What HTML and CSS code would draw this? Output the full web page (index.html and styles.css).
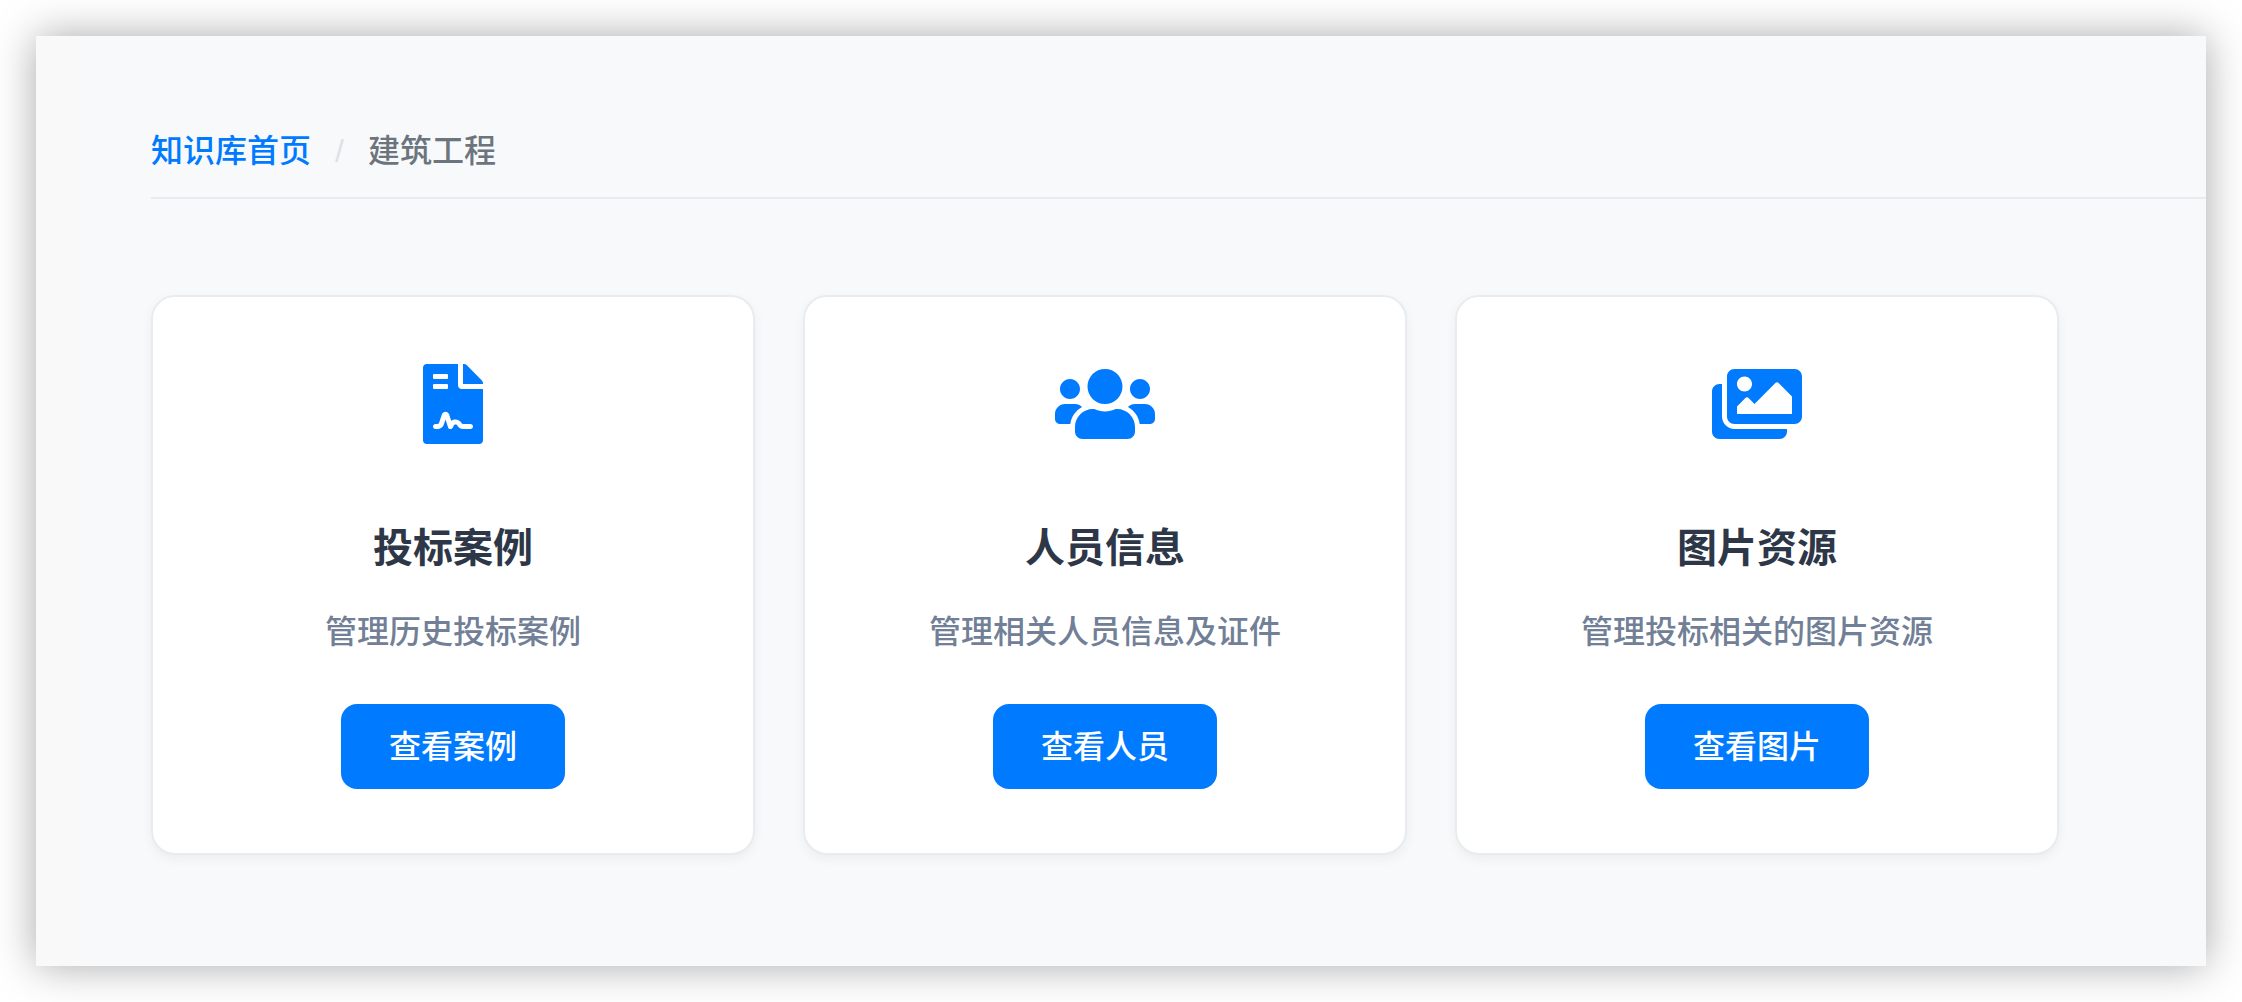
FILE: index.html
```html
<!DOCTYPE html>
<html lang="zh-CN">
<head>
<meta charset="utf-8">
<title>建筑工程</title>
<link rel="stylesheet" href="styles.css">
</head>
<body>
<main class="panel">
  <nav class="breadcrumb" aria-label="breadcrumb">
    <a class="breadcrumb-link" href="#">知识库首页</a>
    <span class="breadcrumb-separator">/</span>
    <span class="breadcrumb-current">建筑工程</span>
  </nav>
  <div class="cards">
    <section class="card">
      <svg class="card-icon" viewBox="0 0 384 512" aria-hidden="true"><path d="M224 136V0H24C10.7 0 0 10.7 0 24v464c0 13.3 10.7 24 24 24h336c13.3 0 24-10.7 24-24V160H248c-13.2 0-24-10.8-24-24zM64 72c0-4.42 3.58-8 8-8h80c4.42 0 8 3.58 8 8v16c0 4.42-3.58 8-8 8H72c-4.42 0-8-3.58-8-8V72zm0 64c0-4.42 3.58-8 8-8h80c4.42 0 8 3.58 8 8v16c0 4.42-3.58 8-8 8H72c-4.42 0-8-3.58-8-8v-16zm192.81 248H304c8.84 0 16 7.16 16 16s-7.16 16-16 16h-47.19c-16.45 0-31.5-9.14-38.64-23.64-2.97-5.53-8.02-5.59-10.17-5.59s-7.2.06-10.05 5.83l-7.67 15.16a15.986 15.986 0 0 1-14.31 8.84c-.38 0-.75-.02-1.14-.05-6.45-.45-12-4.75-14.03-10.89L144 354.59l-10.61 31.88c-5.89 17.66-22.38 29.53-41 29.53H80c-8.84 0-16-7.16-16-16s7.16-16 16-16h12.39c4.83 0 9.11-3.08 10.64-7.66l18.19-54.64c3.3-9.81 12.44-16.41 22.78-16.41s19.48 6.59 22.77 16.41l13.88 41.64c19.77-16.19 54.05-9.7 66 14.16 1.99 3.95 6.12 6.5 10.35 6.5zM377 105L279.1 7c-4.5-4.5-10.6-7-17-7H256v128h128v-6.1c0-6.3-2.5-12.4-7-16.9z"/></svg>
      <h2 class="card-title">投标案例</h2>
      <p class="card-text">管理历史投标案例</p>
      <button class="card-button" type="button">查看案例</button>
    </section>
    <section class="card">
      <svg class="card-icon" viewBox="0 0 640 512" aria-hidden="true"><path d="M96 224c35.3 0 64-28.7 64-64s-28.7-64-64-64-64 28.7-64 64 28.7 64 64 64zm448 0c35.3 0 64-28.7 64-64s-28.7-64-64-64-64 28.7-64 64 28.7 64 64 64zm32 32h-64c-17.6 0-33.5 7.1-45.1 18.6 40.3 22.1 68.9 62 75.1 109.4h66c17.7 0 32-14.3 32-32v-32c0-35.3-28.7-64-64-64zm-256 0c61.9 0 112-50.1 112-112S381.9 32 320 32 208 82.1 208 144s50.1 112 112 112zm76.8 32h-8.3c-20.8 10-43.9 16-68.5 16s-47.6-6-68.5-16h-8.3C179.6 288 128 339.6 128 403.2V432c0 26.5 21.5 48 48 48h288c26.5 0 48-21.5 48-48v-28.8c0-63.6-51.6-115.2-115.2-115.2zm-223.7-13.4C161.5 263.1 145.6 256 128 256H64c-35.3 0-64 28.7-64 64v32c0 17.7 14.3 32 32 32h65.9c6.3-47.4 34.9-87.3 75.2-109.4z"/></svg>
      <h2 class="card-title">人员信息</h2>
      <p class="card-text">管理相关人员信息及证件</p>
      <button class="card-button" type="button">查看人员</button>
    </section>
    <section class="card">
      <svg class="card-icon" viewBox="0 0 576 512" aria-hidden="true"><path d="M480 416v16c0 26.51-21.49 48-48 48H48c-26.51 0-48-21.49-48-48V176c0-26.51 21.49-48 48-48h16v208c0 44.112 35.888 80 80 80h336zm96-80V80c0-26.51-21.49-48-48-48H144c-26.51 0-48 21.49-48 48v256c0 26.51 21.49 48 48 48h384c26.51 0 48-21.49 48-48zM256 128c0 26.51-21.49 48-48 48s-48-21.49-48-48 21.49-48 48-48 48 21.49 48 48zm-96 144l55.515-55.515c4.686-4.686 12.284-4.686 16.971 0L272 256l135.515-135.515c4.686-4.686 12.284-4.686 16.971 0L512 208v112H160v-48z"/></svg>
      <h2 class="card-title">图片资源</h2>
      <p class="card-text">管理投标相关的图片资源</p>
      <button class="card-button" type="button">查看图片</button>
    </section>
  </div>
</main>
</body>
</html>
```

FILE: styles.css
```css
* {
  box-sizing: border-box;
}

body {
  margin: 0;
  padding: 36px;
  background: #fff;
  font-family: "Liberation Sans", "Noto Sans CJK SC", sans-serif;
  font-size: 32px;
  font-weight: 500;
  line-height: 48px;
}

.panel {
  padding: 91px 0 111px 115px;
  background: linear-gradient(to right, #f9f9f9 48px, #f8f9fb 50px);
  box-shadow: 0 0 40px rgba(0, 0, 0, 0.34);
}

.breadcrumb {
  display: flex;
  gap: 24px;
  padding-bottom: 22px;
  border-bottom: 2px solid #e9ecef;
  margin-bottom: 96px;
}

.breadcrumb-link {
  color: #007bff;
  text-decoration: none;
}

.breadcrumb-separator {
  color: #dee2e6;
}

.breadcrumb-current {
  color: #6c757d;
}

.cards {
  display: grid;
  grid-template-columns: repeat(3, 1fr);
  gap: 48px;
  margin-right: 147px;
}

.card {
  display: flex;
  flex-direction: column;
  align-items: center;
  padding: 67px 48px 64px;
  background: #fff;
  border: 2px solid #e9ecef;
  border-radius: 24px;
  box-shadow: 0 4px 12px rgba(0, 0, 0, 0.05);
}

.card-icon {
  height: 80px;
  margin-bottom: 74px;
  fill: #007bff;
}

.card-title {
  margin: 0 0 30px;
  color: #2d3748;
  font-size: 40px;
  line-height: 60px;
}

.card-text {
  margin: 0 0 48px;
  color: #718096;
}

.card-button {
  padding: 19px 48px 18px;
  border: 0;
  border-radius: 16px;
  background: #007bff;
  color: #fff;
  font: inherit;
}
```
